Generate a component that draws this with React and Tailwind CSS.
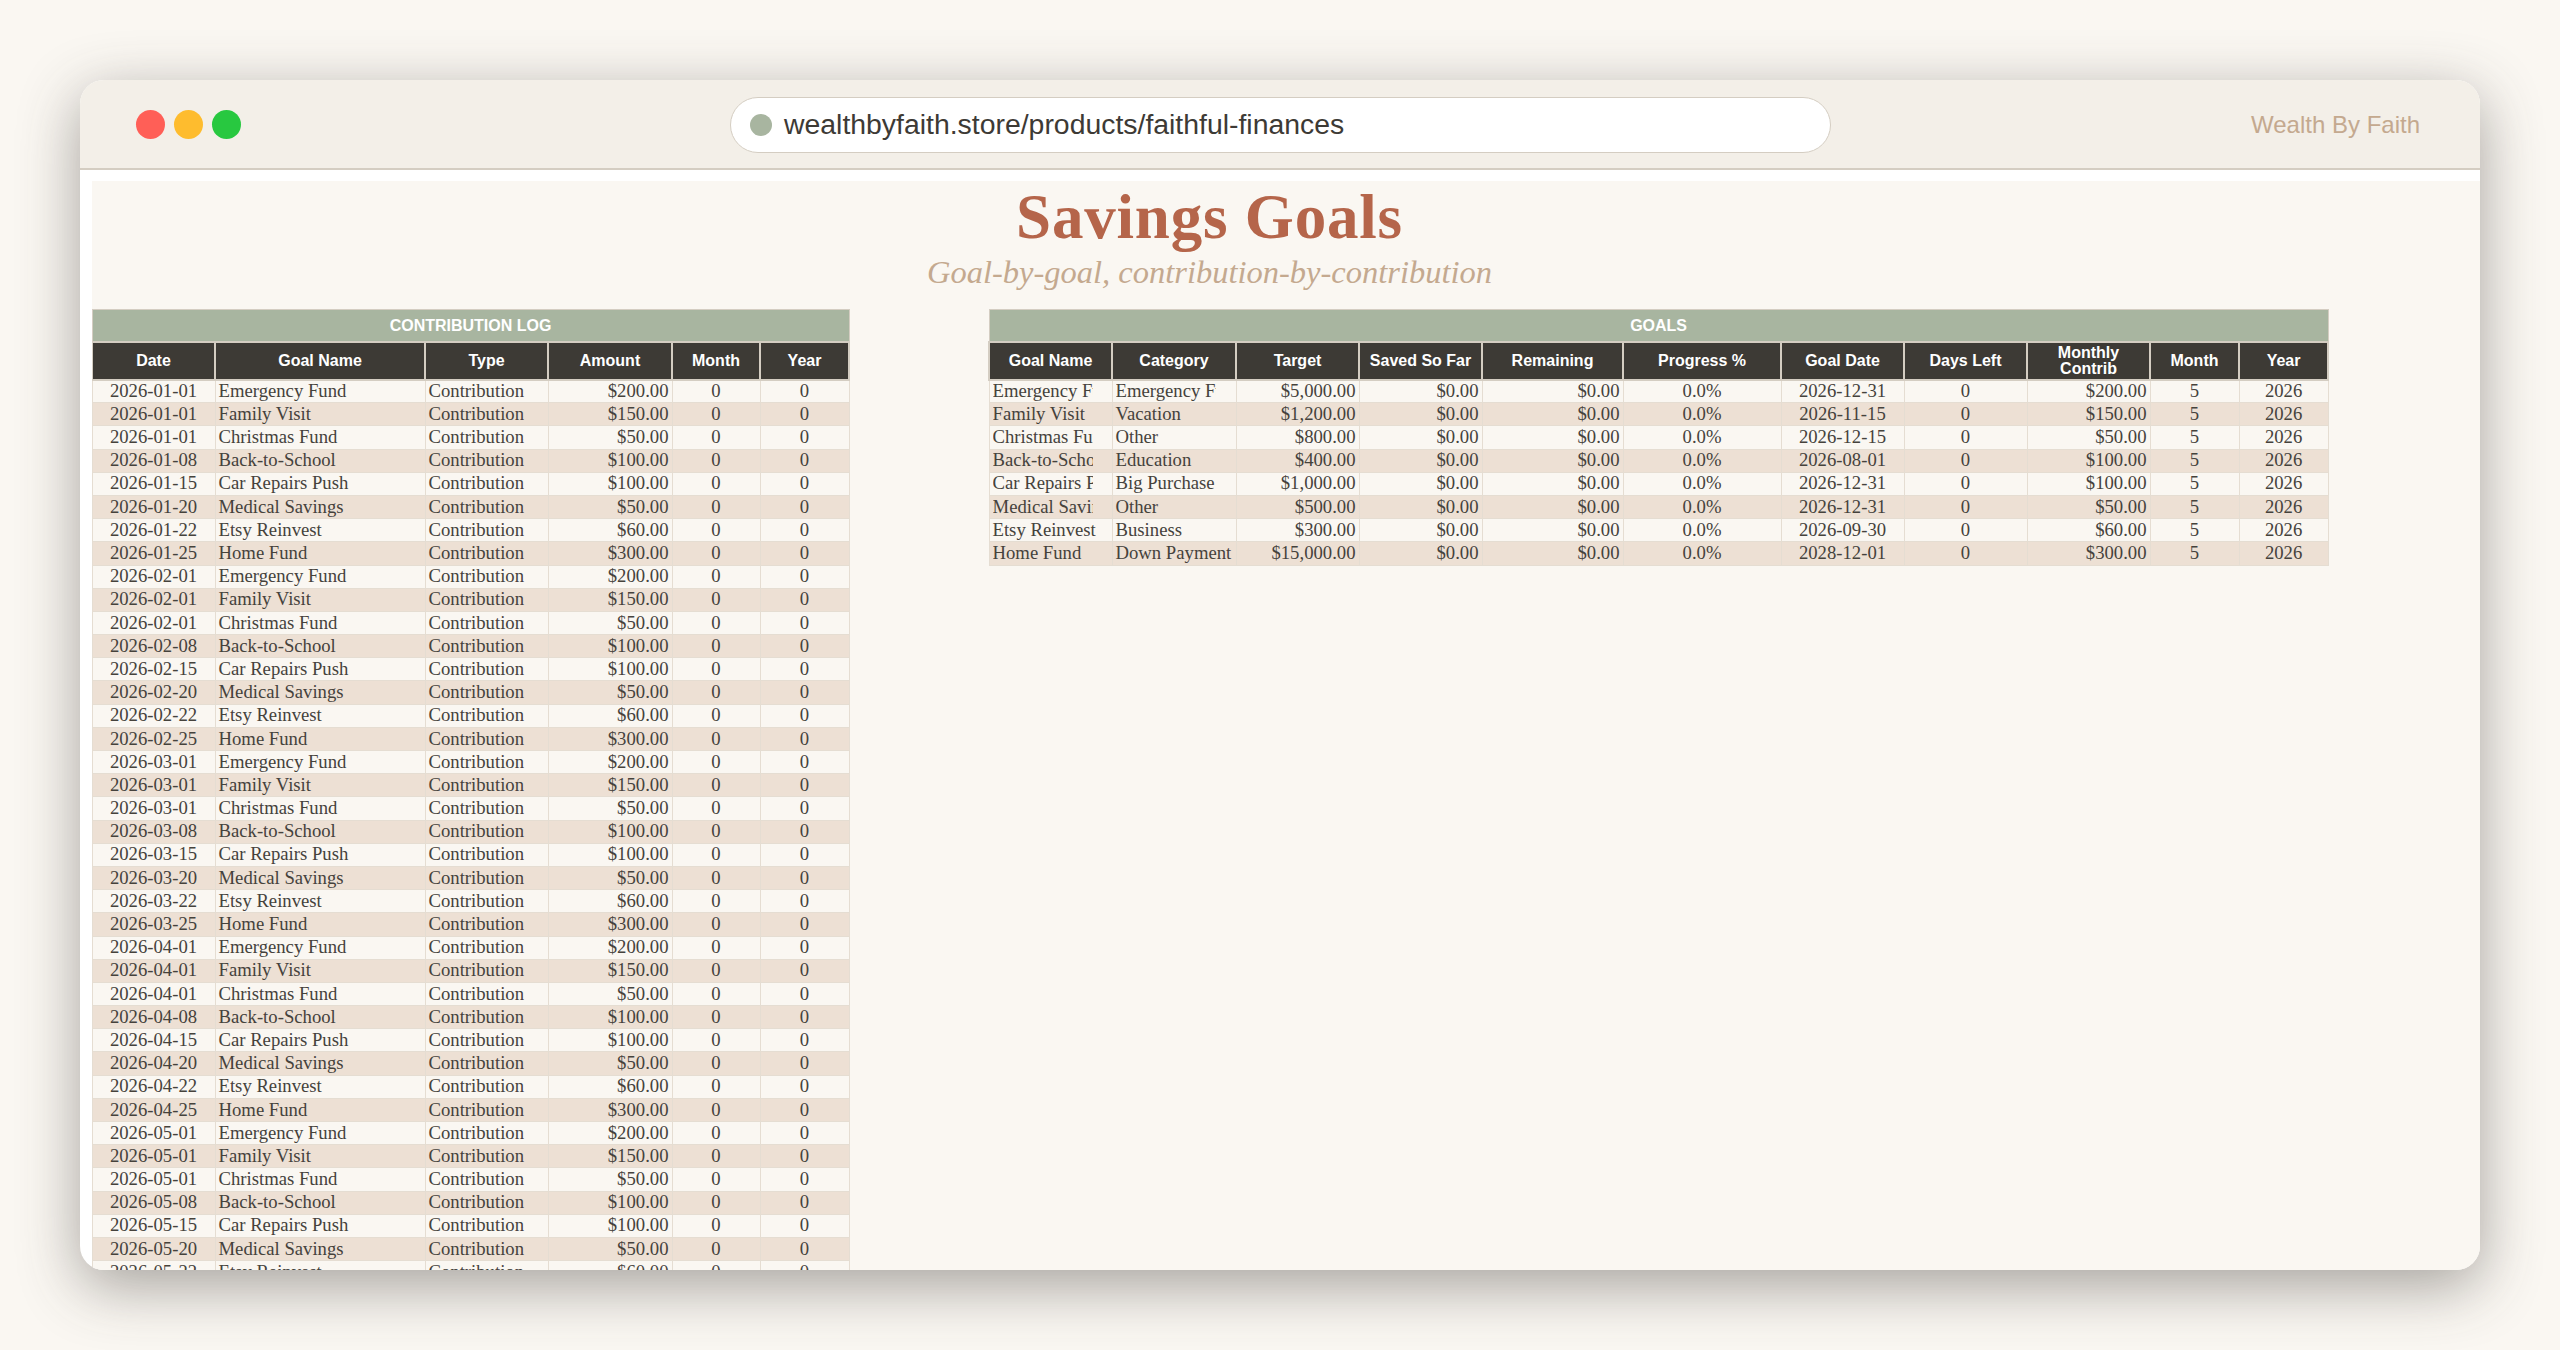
import React from 'react'

const LOG_HEADERS = ['Date', 'Goal Name', 'Type', 'Amount', 'Month', 'Year']
const LOG_WIDTHS = ['w-[123px]', 'w-[210px]', 'w-[123px]', 'w-[124px]', 'w-[88px]', 'w-[89px]']

const GOAL_HEADERS = ['Goal Name', 'Category', 'Target', 'Saved So Far', 'Remaining', 'Progress %', 'Goal Date', 'Days Left', 'Monthly Contrib', 'Month', 'Year']
const GOAL_WIDTHS = ['w-[123px]', 'w-[124px]', 'w-[123px]', 'w-[123px]', 'w-[141px]', 'w-[158px]', 'w-[123px]', 'w-[123px]', 'w-[123px]', 'w-[89px]', 'w-[89px]']

const schedule = [
  ['01', 'Emergency Fund', '$200.00'],
  ['01', 'Family Visit', '$150.00'],
  ['01', 'Christmas Fund', '$50.00'],
  ['08', 'Back-to-School', '$100.00'],
  ['15', 'Car Repairs Push', '$100.00'],
  ['20', 'Medical Savings', '$50.00'],
  ['22', 'Etsy Reinvest', '$60.00'],
  ['25', 'Home Fund', '$300.00'],
]

const logRows = []
for (const month of ['01', '02', '03', '04', '05']) {
  for (const [day, name, amount] of schedule) {
    logRows.push([`2026-${month}-${day}`, name, amount])
  }
}

const goals = [
  ['Emergency Fund', 'Emergency Fund', '$5,000.00', '2026-12-31', '$200.00'],
  ['Family Visit', 'Vacation', '$1,200.00', '2026-11-15', '$150.00'],
  ['Christmas Fund', 'Other', '$800.00', '2026-12-15', '$50.00'],
  ['Back-to-School', 'Education', '$400.00', '2026-08-01', '$100.00'],
  ['Car Repairs Push', 'Big Purchase', '$1,000.00', '2026-12-31', '$100.00'],
  ['Medical Savings', 'Other', '$500.00', '2026-12-31', '$50.00'],
  ['Etsy Reinvest', 'Business', '$300.00', '2026-09-30', '$60.00'],
  ['Home Fund', 'Down Payment', '$15,000.00', '2028-12-01', '$300.00'],
]

const cell = 'border border-[#e5ddd2] px-[3px] h-[23.2px] leading-none overflow-hidden whitespace-nowrap'
const center = `${cell} text-center`
const left = `${cell} text-left`
const right = `${cell} text-right`

function Head({ title, headers, widths }) {
  return (
    <>
      <colgroup>
        {widths.map((w, i) => <col key={i} className={w} />)}
      </colgroup>
      <thead className="font-['Liberation_Sans',sans-serif] font-bold text-white">
        <tr>
          <th colSpan={headers.length} className="h-[32px] pt-[2px] bg-[#a8b5a0] border border-[#d4cdc2] text-[16px] leading-none uppercase">{title}</th>
        </tr>
        <tr>
          {headers.map((h) => (
            <th key={h} className="h-[38px] bg-[#3d3a35] border-2 border-[#d4cdc2] px-1 text-[16px] leading-[16px]">{h}</th>
          ))}
        </tr>
      </thead>
    </>
  )
}

function Row({ i, children }) {
  return <tr className={i % 2 ? 'bg-[#ede0d4]' : 'bg-[#faf7f2]'}>{children}</tr>
}

function Clip({ children }) {
  return <div className="w-[100px] overflow-hidden whitespace-nowrap">{children}</div>
}

export default function App() {
  return (
    <div className="h-[1350px] bg-[#faf7f2] pt-[80px] px-[80px] overflow-hidden">
      <div className="h-[1190px] rounded-[24px] overflow-hidden bg-white flex flex-col shadow-[0_16px_60px_rgba(61,58,53,0.45)]">
        <div className="h-[90px] shrink-0 bg-[#f3efe8] border-b-2 border-[#d4cdc2] flex items-center pt-[1px] pl-[56px] pr-[60px]">
          <div className="flex gap-[9px] w-[594px]">
            <span className="size-[29px] rounded-full bg-[#ff5f57]" />
            <span className="size-[29px] rounded-full bg-[#febc2e]" />
            <span className="size-[29px] rounded-full bg-[#28c840]" />
          </div>
          <div className="w-[1101px] h-[56px] rounded-full bg-white border border-[#d4cdc2] flex items-center gap-[12px] px-[19px]">
            <span className="size-[22px] rounded-full bg-[#a8b5a0]" />
            <span className="font-['Liberation_Sans',sans-serif] text-[28.4px] text-[#3d3a35]">wealthbyfaith.store/products/faithful-finances</span>
          </div>
          <div className="ml-auto font-['Liberation_Sans',sans-serif] text-[24px] text-[#c4a98f]">Wealth By Faith</div>
        </div>
        <div className="flex-1 min-h-0 pl-[12px] pt-[11px]">
          <div className="h-full bg-[#faf7f2] overflow-hidden font-['Liberation_Serif',serif] text-[18.7px] text-[#45423c]">
            <div className="h-[128px] flex flex-col items-center pr-[153px]">
              <div className="text-[63px] font-bold leading-[70px] tracking-[0.8px] mt-[1px] text-[#b5654a]">Savings Goals</div>
              <div className="text-[32.5px] italic leading-[36px] mt-[2px] text-[#c4a98f]">Goal-by-goal, contribution-by-contribution</div>
            </div>
            <div className="flex items-start gap-[138px] -ml-[1px]">
              <table className="table-fixed border-collapse w-[757px] shrink-0">
                <Head title="Contribution Log" headers={LOG_HEADERS} widths={LOG_WIDTHS} />
                <tbody>
                  {logRows.map((r, i) => (
                    <Row key={i} i={i}>
                      <td className={center}>{r[0]}</td>
                      <td className={left}>{r[1]}</td>
                      <td className={left}>Contribution</td>
                      <td className={right}>{r[2]}</td>
                      <td className={center}>0</td>
                      <td className={center}>0</td>
                    </Row>
                  ))}
                </tbody>
              </table>
              <table className="table-fixed border-collapse w-[1341px] shrink-0">
                <Head title="Goals" headers={GOAL_HEADERS} widths={GOAL_WIDTHS} />
                <tbody>
                  {goals.map((g, i) => (
                    <Row key={i} i={i}>
                      <td className={left}>{g[0] === 'Etsy Reinvest' ? g[0] : <Clip>{g[0]}</Clip>}</td>
                      <td className={left}>{g[1] === 'Emergency Fund' ? <Clip>{g[1]}</Clip> : g[1]}</td>
                      <td className={right}>{g[2]}</td>
                      <td className={right}>$0.00</td>
                      <td className={right}>$0.00</td>
                      <td className={center}>0.0%</td>
                      <td className={center}>{g[3]}</td>
                      <td className={center}>0</td>
                      <td className={right}>{g[4]}</td>
                      <td className={center}>5</td>
                      <td className={center}>2026</td>
                    </Row>
                  ))}
                </tbody>
              </table>
            </div>
          </div>
        </div>
      </div>
    </div>
  )
}
